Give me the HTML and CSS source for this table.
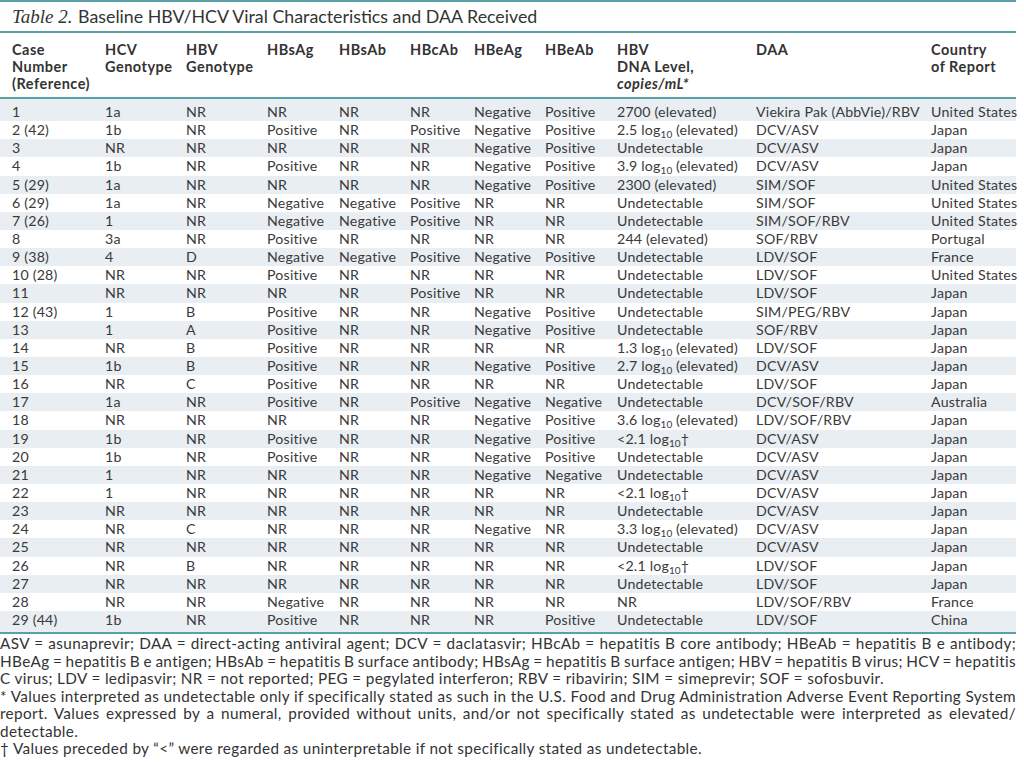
FILE: index.html
```html
<!DOCTYPE html>
<html lang="en">
<head>
<meta charset="utf-8">
<title>Table 2. Baseline HBV/HCV Viral Characteristics and DAA Received</title>
<link rel="stylesheet" href="styles.css">
</head>
<body>
<div class="page">
  <div class="title"><span class="label">Table 2.</span> Baseline HBV/HCV Viral Characteristics and DAA Received</div>
  <table class="data">
    <colgroup>
      <col class="c1"><col class="c2"><col class="c3"><col class="c4"><col class="c5"><col class="c6"><col class="c7"><col class="c8"><col class="c9"><col class="c10"><col class="c11">
    </colgroup>
    <thead>
      <tr>
        <th>Case<br>Number<br>(Reference)</th>
        <th>HCV<br>Genotype</th>
        <th>HBV<br>Genotype</th>
        <th>HBsAg</th>
        <th>HBsAb</th>
        <th>HBcAb</th>
        <th>HBeAg</th>
        <th>HBeAb</th>
        <th>HBV<br>DNA Level,<br><i>copies/mL*</i></th>
        <th>DAA</th>
        <th>Country<br>of Report</th>
      </tr>
    </thead>
    <tbody>
      <tr><td>1</td><td>1a</td><td>NR</td><td>NR</td><td>NR</td><td>NR</td><td>Negative</td><td>Positive</td><td>2700 (elevated)</td><td>Viekira Pak (AbbVie)/RBV</td><td>United States</td></tr>
      <tr><td>2 (42)</td><td>1b</td><td>NR</td><td>Positive</td><td>NR</td><td>Positive</td><td>Negative</td><td>Positive</td><td>2.5 log<sub>10</sub> (elevated)</td><td>DCV/ASV</td><td>Japan</td></tr>
      <tr><td>3</td><td>NR</td><td>NR</td><td>NR</td><td>NR</td><td>NR</td><td>Negative</td><td>Positive</td><td>Undetectable</td><td>DCV/ASV</td><td>Japan</td></tr>
      <tr><td>4</td><td>1b</td><td>NR</td><td>Positive</td><td>NR</td><td>NR</td><td>Negative</td><td>Positive</td><td>3.9 log<sub>10</sub> (elevated)</td><td>DCV/ASV</td><td>Japan</td></tr>
      <tr><td>5 (29)</td><td>1a</td><td>NR</td><td>NR</td><td>NR</td><td>NR</td><td>Negative</td><td>Positive</td><td>2300 (elevated)</td><td>SIM/SOF</td><td>United States</td></tr>
      <tr><td>6 (29)</td><td>1a</td><td>NR</td><td>Negative</td><td>Negative</td><td>Positive</td><td>NR</td><td>NR</td><td>Undetectable</td><td>SIM/SOF</td><td>United States</td></tr>
      <tr><td>7 (26)</td><td>1</td><td>NR</td><td>Negative</td><td>Negative</td><td>Positive</td><td>NR</td><td>NR</td><td>Undetectable</td><td>SIM/SOF/RBV</td><td>United States</td></tr>
      <tr><td>8</td><td>3a</td><td>NR</td><td>Positive</td><td>NR</td><td>NR</td><td>NR</td><td>NR</td><td>244 (elevated)</td><td>SOF/RBV</td><td>Portugal</td></tr>
      <tr><td>9 (38)</td><td>4</td><td>D</td><td>Negative</td><td>Negative</td><td>Positive</td><td>Negative</td><td>Positive</td><td>Undetectable</td><td>LDV/SOF</td><td>France</td></tr>
      <tr><td>10 (28)</td><td>NR</td><td>NR</td><td>Positive</td><td>NR</td><td>NR</td><td>NR</td><td>NR</td><td>Undetectable</td><td>LDV/SOF</td><td>United States</td></tr>
      <tr><td>11</td><td>NR</td><td>NR</td><td>NR</td><td>NR</td><td>Positive</td><td>NR</td><td>NR</td><td>Undetectable</td><td>LDV/SOF</td><td>Japan</td></tr>
      <tr><td>12 (43)</td><td>1</td><td>B</td><td>Positive</td><td>NR</td><td>NR</td><td>Negative</td><td>Positive</td><td>Undetectable</td><td>SIM/PEG/RBV</td><td>Japan</td></tr>
      <tr><td>13</td><td>1</td><td>A</td><td>Positive</td><td>NR</td><td>NR</td><td>Negative</td><td>Positive</td><td>Undetectable</td><td>SOF/RBV</td><td>Japan</td></tr>
      <tr><td>14</td><td>NR</td><td>B</td><td>Positive</td><td>NR</td><td>NR</td><td>NR</td><td>NR</td><td>1.3 log<sub>10</sub> (elevated)</td><td>LDV/SOF</td><td>Japan</td></tr>
      <tr><td>15</td><td>1b</td><td>B</td><td>Positive</td><td>NR</td><td>NR</td><td>Negative</td><td>Positive</td><td>2.7 log<sub>10</sub> (elevated)</td><td>DCV/ASV</td><td>Japan</td></tr>
      <tr><td>16</td><td>NR</td><td>C</td><td>Positive</td><td>NR</td><td>NR</td><td>NR</td><td>NR</td><td>Undetectable</td><td>LDV/SOF</td><td>Japan</td></tr>
      <tr><td>17</td><td>1a</td><td>NR</td><td>Positive</td><td>NR</td><td>Positive</td><td>Negative</td><td>Negative</td><td>Undetectable</td><td>DCV/SOF/RBV</td><td>Australia</td></tr>
      <tr><td>18</td><td>NR</td><td>NR</td><td>NR</td><td>NR</td><td>NR</td><td>Negative</td><td>Positive</td><td>3.6 log<sub>10</sub> (elevated)</td><td>LDV/SOF/RBV</td><td>Japan</td></tr>
      <tr><td>19</td><td>1b</td><td>NR</td><td>Positive</td><td>NR</td><td>NR</td><td>Negative</td><td>Positive</td><td>&lt;2.1 log<sub>10</sub>†</td><td>DCV/ASV</td><td>Japan</td></tr>
      <tr><td>20</td><td>1b</td><td>NR</td><td>Positive</td><td>NR</td><td>NR</td><td>Negative</td><td>Positive</td><td>Undetectable</td><td>DCV/ASV</td><td>Japan</td></tr>
      <tr><td>21</td><td>1</td><td>NR</td><td>NR</td><td>NR</td><td>NR</td><td>Negative</td><td>Negative</td><td>Undetectable</td><td>DCV/ASV</td><td>Japan</td></tr>
      <tr><td>22</td><td>1</td><td>NR</td><td>NR</td><td>NR</td><td>NR</td><td>NR</td><td>NR</td><td>&lt;2.1 log<sub>10</sub>†</td><td>DCV/ASV</td><td>Japan</td></tr>
      <tr><td>23</td><td>NR</td><td>NR</td><td>NR</td><td>NR</td><td>NR</td><td>NR</td><td>NR</td><td>Undetectable</td><td>DCV/ASV</td><td>Japan</td></tr>
      <tr><td>24</td><td>NR</td><td>C</td><td>NR</td><td>NR</td><td>NR</td><td>Negative</td><td>NR</td><td>3.3 log<sub>10</sub> (elevated)</td><td>DCV/ASV</td><td>Japan</td></tr>
      <tr><td>25</td><td>NR</td><td>NR</td><td>NR</td><td>NR</td><td>NR</td><td>NR</td><td>NR</td><td>Undetectable</td><td>DCV/ASV</td><td>Japan</td></tr>
      <tr><td>26</td><td>NR</td><td>B</td><td>NR</td><td>NR</td><td>NR</td><td>NR</td><td>NR</td><td>&lt;2.1 log<sub>10</sub>†</td><td>LDV/SOF</td><td>Japan</td></tr>
      <tr><td>27</td><td>NR</td><td>NR</td><td>NR</td><td>NR</td><td>NR</td><td>NR</td><td>NR</td><td>Undetectable</td><td>LDV/SOF</td><td>Japan</td></tr>
      <tr><td>28</td><td>NR</td><td>NR</td><td>Negative</td><td>NR</td><td>NR</td><td>NR</td><td>NR</td><td>NR</td><td>LDV/SOF/RBV</td><td>France</td></tr>
      <tr><td>29 (44)</td><td>1b</td><td>NR</td><td>Positive</td><td>NR</td><td>NR</td><td>NR</td><td>Positive</td><td>Undetectable</td><td>LDV/SOF</td><td>China</td></tr>
    </tbody>
  </table>
  <div class="notes">
    <p class="note">
      <span class="line full">ASV = asunaprevir; DAA = direct-acting antiviral agent; DCV = daclatasvir; HBcAb = hepatitis B core antibody; HBeAb = hepatitis B e antibody;</span>
      <span class="line full">HBeAg = hepatitis B e antigen; HBsAb = hepatitis B surface antibody; HBsAg = hepatitis B surface antigen; HBV = hepatitis B virus; HCV = hepatitis</span>
      <span class="line">C virus; LDV = ledipasvir; NR = not reported; PEG = pegylated interferon; RBV = ribavirin; SIM = simeprevir; SOF = sofosbuvir.</span>
    </p>
    <p class="note">
      <span class="line full">* Values interpreted as undetectable only if specifically stated as such in the U.S. Food and Drug Administration Adverse Event Reporting System</span>
      <span class="line full">report. Values expressed by a numeral, provided without units, and/or not specifically stated as undetectable were interpreted as elevated/</span>
      <span class="line">detectable.</span>
    </p>
    <p class="note">
      <span class="line">† Values preceded by “&lt;” were regarded as uninterpretable if not specifically stated as undetectable.</span>
    </p>
  </div>
</div>
</body>
</html>
```

FILE: styles.css
```css
html, body {
  margin: 0;
  padding: 0;
  background: #ffffff;
}

.page {
  width: 1016px;
  font-family: Lato, "Open Sans", sans-serif;
  color: #3a3a3a;
}

.title {
  border-top: 2px solid #5a9fa6;
  border-bottom: 2px solid #5a9fa6;
  height: 29px;
  line-height: 28px;
  padding-left: 12px;
  font-size: 17.8px;
  color: #333333;
  white-space: nowrap;
}

.title .label {
  font-family: "Liberation Serif", serif;
  font-style: italic;
  font-size: 19px;
  margin-right: 1px;
}

.data {
  width: 1016px;
  border-collapse: collapse;
  table-layout: fixed;
  font-size: 14.2px;
  letter-spacing: 0.2px;
}

.c1 { width: 105px; }
.c2 { width: 81px; }
.c3 { width: 81px; }
.c4 { width: 72px; }
.c5 { width: 71px; }
.c6 { width: 64px; }
.c7 { width: 71px; }
.c8 { width: 72px; }
.c9 { width: 139px; }
.c10 { width: 175px; }
.c11 { width: 85px; }

.data th {
  text-align: left;
  vertical-align: top;
  font-weight: 700;
  font-size: 14.5px;
  letter-spacing: 0.5px;
  line-height: 17px;
  padding: 8px 0 5px 0;
  color: #333333;
  border-bottom: 2px solid #5a9fa6;
  white-space: nowrap;
}

.data th i {
  font-style: italic;
}

.data td {
  padding: 0;
  line-height: 18.14px;
  white-space: nowrap;
  vertical-align: middle;
}

.data th:first-child,
.data td:first-child {
  padding-left: 12px;
}

.data tbody tr:nth-child(odd) td {
  background: #e8eef2;
}

.data tbody tr:first-child td {
  padding-top: 4px;
}

.data tbody tr:last-child td {
  padding-bottom: 3px;
  border-bottom: 2px solid #5a9fa6;
}

.data sub {
  font-size: 10px;
  letter-spacing: 0;
  line-height: 0;
  vertical-align: -3px;
}

.notes {
  font-size: 15.3px;
  letter-spacing: 0.35px;
  line-height: 17.5px;
  color: #333333;
  padding-top: 1px;
}

.note {
  margin: 0;
}

.line {
  display: block;
  white-space: nowrap;
}

.line.full {
  text-align: justify;
  text-align-last: justify;
  white-space: normal;
  word-spacing: -4px;
}
```
